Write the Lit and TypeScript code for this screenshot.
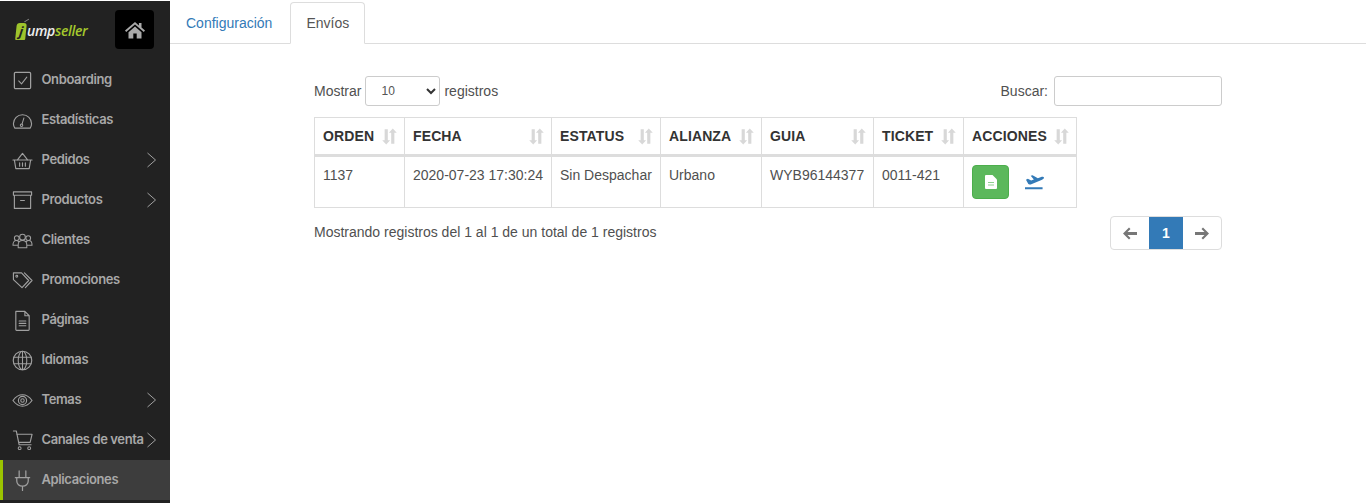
import { LitElement, html, css, svg } from "lit";
import { customElement } from "lit/decorators.js";

const s = (inner: unknown) => html`<svg class="ico" viewBox="0 0 22 22" fill="none" stroke="currentColor" stroke-width="1.1" stroke-linecap="round" stroke-linejoin="round">${inner}</svg>`;

const icons: Record<string, unknown> = {
  check: s(svg`<rect x="2.500" y="2.500" width="17" height="17" rx="1.200" stroke-width="1.300"/><path d="M7 11.500l3 3 5.500-7"/>`),
  gauge: s(svg`<path d="M3 19c-.7-1-1.500-2.800-1.500-4.500a9.500 9.500 0 0 1 19 0c0 1.700-.8 3.500-1.500 4.500z" stroke-width="1.200"/><circle cx="10" cy="16" r="1.300"/><path d="M10.500 14.800l2-6.500"/>`),
  basket: s(svg`<path d="M1 10.500h20M2.500 10.500l1.500 9h14l1.500-9M5.500 10.500l5.500-7 5.500 7M8 13.500v3.500M11 13.500v3.500M14 13.500v3.500" stroke-width="1.200"/>`),
  box: s(svg`<path d="M1.500 2h19v3.500h-19zM2.500 5.500v13.800h17V5.500M9 11h4" stroke-width="1.200"/>`),
  people: s(svg`<circle cx="11" cy="7.500" r="3"/><circle cx="5" cy="8.500" r="2.500"/><circle cx="17" cy="8.500" r="2.500"/><path d="M6.500 18.500v-3c0-3 2-4.500 4.500-4.500s4.500 1.500 4.500 4.500v3zM7.200 12.300c-.8-.7-1.700-1.200-2.700-1.200-2 0-3.500 1.500-3.500 4.900h5.500M14.800 12.300c.8-.7 1.700-1.200 2.700-1.200 2 0 3.500 1.500 3.500 4.900h-5.500"/>`),
  tags: s(svg`<path d="M1.500 3h8.500l7.500 8-7 7.500-9-8.500zM13 3l8 8-7 7.500" stroke-width="1.200"/><circle cx="5" cy="6.500" r="1"/>`),
  page: s(svg`<path d="M4 1.500h9.500l4.500 4.500v14.500c0 .5-.3.8-.8.8H4.800c-.5 0-.8-.3-.8-.8zM13.500 1.500V6H18M7.500 11.500h7M7.500 14h7M7.500 16.500h7" stroke-width="1.200"/>`),
  globe: s(svg`<circle cx="11" cy="11" r="9.700" stroke-width="1.200"/><ellipse cx="11" cy="11" rx="4.500" ry="9.700"/><path d="M11 1.500v19M2 7.500h18M2 14.500h18"/>`),
  eye: s(svg`<path d="M1 11c3-4 6.500-6 10-6s7 2 10 6c-3 4-6.500 6-10 6s-7-2-10-6z" stroke-width="1.200"/><circle cx="11" cy="11" r="4.300" stroke-width="1.200"/><circle cx="11" cy="11" r="1.800"/>`),
  cart: s(svg`<path d="M1.500 1h3l3 14.500h12.500M5 4.500h16l-2 8.500H7" stroke-width="1.200"/><circle cx="8" cy="19" r="1.500"/><circle cx="18" cy="19" r="1.500"/>`),
  plug: s(svg`<path d="M7.500 1v7M14.500 1v7M3.500 8h15M5 8v3.500c0 3 2.500 5.500 6 5.500s6-2.500 6-5.500V8M11 17v4.500" stroke-width="1.300"/>`),
};

const items = [
  ["Onboarding", "check", false],
  ["Estadísticas", "gauge", false],
  ["Pedidos", "basket", true],
  ["Productos", "box", true],
  ["Clientes", "people", false],
  ["Promociones", "tags", false],
  ["Páginas", "page", false],
  ["Idiomas", "globe", false],
  ["Temas", "eye", true],
  ["Canales de venta", "cart", true],
] as const;

const cols = [
  ["ORDEN", 90],
  ["FECHA", 147],
  ["ESTATUS", 109],
  ["ALIANZA", 101],
  ["GUIA", 112],
  ["TICKET", 90],
  ["ACCIONES", 113],
] as const;

const sortIcon = html`<svg class="sort" viewBox="0 0 14 14" fill="currentColor"><path d="M3 1h2.600v9H7.500L4.300 13.500 1 10h2zM8.400 13V4H6.500L9.700.5 13 4h-2v9z"/></svg>`;

@customElement("app-root")
export class AppRoot extends LitElement {
  static styles = css`
    :host { display: block; height: 503px; overflow: hidden; background: #fff; font-family: "Liberation Sans", Arial, sans-serif; font-size: 14px; color: #505050; }
    .page { display: flex; height: 503px; padding-top: 1px; box-sizing: border-box; }
    .side { width: 170px; flex: none; background: #222; color: #a8a8a8; font-family: Inter, sans-serif; font-size: 13px; font-weight: 600; letter-spacing: -0.38px; }
    .brand { height: 59px; display: flex; align-items: flex-start; padding: 9px 0 0 16px; box-sizing: border-box; }
    .logo { width: 99px; height: 40px; display: flex; align-items: center; font-family: "Open Sans", sans-serif; font-style: italic; font-size: 14px; letter-spacing: -0.33px; color: #a5c82d; font-weight: 600; }
    .logo b { color: #eee; font-weight: 600; }
    .tag { position: relative; width: 10px; height: 17px; margin: 2px 1px 0 0; background: #9ec42c; border-radius: 3px 3px 1px 1px; transform: skewX(-6deg); color: #222; font-size: 13px; line-height: 16px; text-align: center; font-weight: 700; }
    .tag::after { content: ""; position: absolute; right: -2px; top: -3px; width: 5px; height: 1px; background: #888; transform: rotate(-35deg); }
    .home { width: 39px; height: 39px; background: #000; border-radius: 4px; display: flex; align-items: center; justify-content: center; }
    .home svg { width: 20px; height: 18px; fill: #aaa; }
    .item { height: 40px; display: flex; align-items: center; position: relative; padding-left: 12px; box-sizing: border-box; white-space: nowrap; }
    .item.on { background: #3d3d3d; }
    .item.on::before { content: ""; position: absolute; left: 0; top: 0; bottom: 0; width: 3px; background: #9bc400; }
    .item span { margin-bottom: 2px; }
    .ico { width: 21px; height: 21px; flex: none; margin-right: 8.500px; color: #a0a0a0; }
    .chev { position: absolute; left: 146px; top: 12px; width: 11px; height: 16px; color: #a0a0a0; }
    .main { flex: 1; min-width: 0; }
    .tabs { height: 43px; box-sizing: border-box; border-bottom: 1px solid #ddd; display: flex; padding-top: 1px; }
    .tab { height: 41px; line-height: 42px; padding: 0 16px; color: #337ab7; }
    .tab.active { color: #555; background: #fff; border: 1px solid #ddd; border-bottom-color: #fff; border-radius: 4px 4px 0 0; height: 42px; box-sizing: border-box; line-height: 41px; padding: 0 15px; margin-left: 2px; }
    .content { width: 908px; margin: 32px 0 0 144px; }
    .top { display: flex; justify-content: space-between; align-items: center; height: 30px; }
    .len { display: flex; align-items: center; gap: 4px; }
    .select { width: 75px; height: 30px; box-sizing: border-box; border: 1px solid #ccc; border-radius: 3px; display: flex; align-items: center; justify-content: space-between; padding: 0 3px 0 15px; font-size: 12px; color: #555; }
    .select svg { width: 10px; height: 8px; stroke: #333; fill: none; stroke-width: 2; }
    .search { display: flex; align-items: center; gap: 6px; }
    .input { width: 168px; height: 30px; box-sizing: border-box; border: 1px solid #ccc; border-radius: 3px; }
    table { border-collapse: collapse; table-layout: fixed; margin-top: 11px; width: 762px; }
    th, td { border: 1px solid #ddd; padding: 0 8px; text-align: left; white-space: nowrap; box-sizing: border-box; }
    th { height: 38px; border-bottom-width: 3px; font-size: 14px; font-weight: 700; letter-spacing: 0.12px; color: #333; position: relative; }
    th .sort { position: absolute; right: 6px; top: 10px; width: 17px; height: 17px; color: #d8d8d8; }
    td { height: 52px; vertical-align: top; padding-top: 8px; line-height: 20px; }
    td.act { padding-top: 8px; }
    .actions { display: flex; align-items: center; gap: 16px; }
    .btn { width: 37px; height: 34px; background: #5cb85c; border: 1px solid #4cae4c; border-radius: 4px; box-sizing: border-box; display: flex; align-items: center; justify-content: center; }
    .btn svg { width: 12px; height: 14px; }
    .fly { width: 19px; height: 16px; color: #337ab7; }
    .foot { display: flex; justify-content: space-between; margin-top: 8px; }
    .info { padding-top: 6px; line-height: 20px; }
    .pager { display: flex; height: 34px; border: 1px solid #ddd; border-radius: 4px; box-sizing: border-box; overflow: hidden; }
    .pg { display: flex; align-items: center; justify-content: center; color: #777; }
    .pg svg { width: 16px; height: 13px; fill: currentColor; }
    .pg.prev { width: 38px; }
    .pg.next { width: 38px; }
    .pg.cur { width: 34px; background: #337ab7; color: #fff; font-weight: 700; }
  `;

  render() {
    return html`<div class="page">
      <nav class="side">
        <div class="brand">
          <div class="logo"><span class="tag">j</span><b>ump</b>seller</div>
          <div class="home"><svg viewBox="0 0 20 18"><path d="M10 1L0 9.600l1.200 1.400L10 3.500 18.800 11 20 9.600 16.500 6.600V2h-2.600v2.400zM3.500 11.300V17.500h4.800v-5h3.400v5h4.800v-6.200L10 5.600z"/></svg></div>
        </div>
        ${items.map(([label, icon, more]) => html`<div class="item">${icons[icon]}<span>${label}</span>${more ? html`<svg class="chev" viewBox="0 0 11 16" fill="none" stroke="currentColor"><path d="M1.500 1l8 7-8 7"/></svg>` : ""}</div>`)}
        <div class="item on">${icons.plug}<span>Aplicaciones</span></div>
      </nav>
      <main class="main">
        <div class="tabs">
          <div class="tab">Configuración</div>
          <div class="tab active">Envíos</div>
        </div>
        <div class="content">
          <div class="top">
            <div class="len">Mostrar
              <div class="select">10<svg viewBox="0 0 10 8"><path d="M1 2l4 4 4-4"/></svg></div>
              registros</div>
            <div class="search">Buscar:<div class="input"></div></div>
          </div>
          <table>
            <colgroup>${cols.map(([, w]) => html`<col style="width:${w}px" />`)}</colgroup>
            <thead><tr>${cols.map(([t]) => html`<th>${t}${sortIcon}</th>`)}</tr></thead>
            <tbody><tr>
              <td>1137</td><td>2020-07-23 17:30:24</td><td>Sin Despachar</td><td>Urbano</td><td>WYB96144377</td><td>0011-421</td>
              <td class="act"><div class="actions">
                <div class="btn"><svg viewBox="0 0 12 14"><path fill="#fff" d="M0 1a1 1 0 0 1 1-1h6.500L12 4.500V13a1 1 0 0 1-1 1H1a1 1 0 0 1-1-1z"/><path stroke="#8fd08f" d="M3 7.500h6M3 10h6" /></svg></div>
                <svg class="fly" viewBox="0 0 20 16" fill="currentColor"><path d="M0 13.500h18.500V15.500H0zM1 5.500l2-1 3.500 1.800 2.800-1L6 1.500 8 1l5.500 3 3.500-1.300c1.500-.5 2.800 0 3 .8.200.8-.8 1.500-2 2L6 10.500c-1 .3-2 .2-2.500-.3z"/></svg>
              </div></td>
            </tr></tbody>
          </table>
          <div class="foot">
            <div class="info">Mostrando registros del 1 al 1 de un total de 1 registros</div>
            <div class="pager">
              <div class="pg prev"><svg viewBox="0 0 16 13"><path d="M7 0.500L1 6.500l6 6 1.500-1.500L5.500 8H15V5H5.500l3-3z"/></svg></div>
              <div class="pg cur">1</div>
              <div class="pg next"><svg viewBox="0 0 16 13"><path d="M9 0.500l6 6-6 6-1.500-1.500L10.500 8H1V5h9.500l-3-3z"/></svg></div>
            </div>
          </div>
        </div>
      </main>
    </div>`;
  }
}
